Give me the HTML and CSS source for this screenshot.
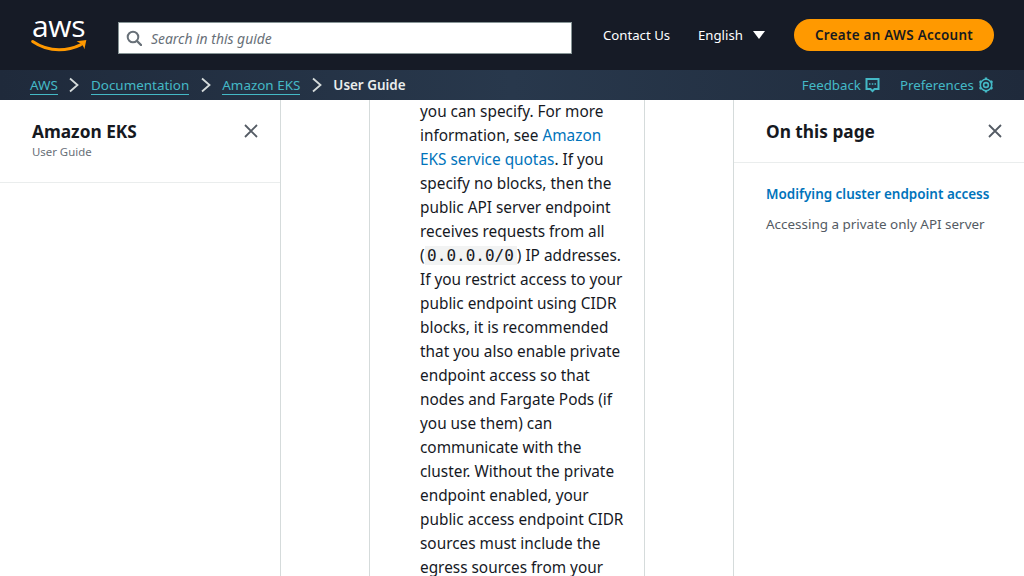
FILE: index.html
```html
<!DOCTYPE html>
<html lang="en">
<head>
<meta charset="utf-8">
<title>Amazon EKS User Guide</title>
<link rel="stylesheet" href="styles.css">
</head>
<body>
<header class="topbar">
  <a class="logo" href="#">
    <span class="logo-text">aws</span>
    <svg class="logo-smile" width="58" height="14" viewBox="0 0 58 14"><path d="M1 2.500C9 8 18 11 28 11C36 11 44 9 50 6" fill="none" stroke="#f90" stroke-width="3" stroke-linecap="round"/><path d="M46 2.300L56 1L54 10.500C53.500 7.500 51 4.500 46 2.300Z" fill="#f90"/></svg>
  </a>
  <label class="search">
    <svg width="16" height="16" viewBox="0 0 16 16"><circle cx="7" cy="7" r="5.300" fill="none" stroke="#687078" stroke-width="2"/><path d="M11 11L15 15" stroke="#687078" stroke-width="2.400" stroke-linecap="round"/></svg>
    <span class="search-text">Search in this guide</span>
  </label>
  <a class="top-link contact" href="#">Contact Us</a>
  <a class="top-link lang" href="#"><span class="lang-name">English</span><span class="caret"></span></a>
  <a class="cta" href="#">Create an AWS Account</a>
</header>
<nav class="crumbs">
  <a href="#">AWS</a>
  <svg class="chev" width="12" height="16" viewBox="0 0 12 16"><path d="M2 1.500L9.500 8L2 14.500" fill="none" stroke="#d5dbdb" stroke-width="1.800"/></svg>
  <a href="#">Documentation</a>
  <svg class="chev" width="12" height="16" viewBox="0 0 12 16"><path d="M2 1.500L9.500 8L2 14.500" fill="none" stroke="#d5dbdb" stroke-width="1.800"/></svg>
  <a href="#">Amazon EKS</a>
  <svg class="chev" width="12" height="16" viewBox="0 0 12 16"><path d="M2 1.500L9.500 8L2 14.500" fill="none" stroke="#d5dbdb" stroke-width="1.800"/></svg>
  <span class="current">User Guide</span>
  <span class="tools">
    <a href="#">Feedback<svg width="15" height="16" viewBox="0 0 15 16"><path d="M1.500 2H13.500V12H9.500L7.500 14L5.500 12H1.500Z" fill="none" stroke="#44b9c6" stroke-width="2"/><path d="M4 7H5.500M6.800 7H8.300M9.500 7H11" stroke="#44b9c6" stroke-width="1.600"/></svg></a>
    <a href="#">Preferences<svg width="16" height="16" viewBox="0 0 16 16"><circle cx="8" cy="8" r="2.400" fill="none" stroke="#44b9c6" stroke-width="1.600"/><circle cx="8" cy="8" r="5.700" fill="none" stroke="#44b9c6" stroke-width="1.600"/><path d="M8 0.500V2.500M8 13.500V15.500M1.500 4.250L3.300 5.300M12.700 10.700L14.500 11.750M1.500 11.750L3.300 10.700M12.700 5.300L14.500 4.250" stroke="#44b9c6" stroke-width="2.400"/></svg></a>
  </span>
</nav>
<main class="main">
  <aside class="nav-panel">
    <div class="panel-head">
      <div>
        <h2>Amazon EKS</h2>
        <p class="sub">User Guide</p>
      </div>
      <svg class="close" width="16" height="16" viewBox="0 0 16 16"><path d="M2 2L14 14M14 2L2 14" stroke="#545b64" stroke-width="1.800"/></svg>
    </div>
  </aside>
  <div class="content">
    <article class="article">
      <p>you can specify. For more information, see <a href="#">Amazon EKS service quotas</a>. If you specify no blocks, then the public API server endpoint receives requests from all (<code>0.0.0.0/0</code>) IP addresses. If you restrict access to your public endpoint using CIDR blocks, it is recommended that you also enable private endpoint access so that nodes and Fargate Pods (if you use them) can communicate with the cluster. Without the private endpoint enabled, your public access endpoint CIDR sources must include the egress sources from your</p>
    </article>
  </div>
  <aside class="toc-panel">
    <div class="toc-head">
      <h2>On this page</h2>
      <svg class="close" width="16" height="16" viewBox="0 0 16 16"><path d="M2 2L14 14M14 2L2 14" stroke="#545b64" stroke-width="1.800"/></svg>
    </div>
    <div class="toc-list">
      <a class="toc-active" href="#">Modifying cluster endpoint access</a>
      <a class="toc-item" href="#">Accessing a private only API server</a>
    </div>
  </aside>
</main>
</body>
</html>
```
FILE: styles.css
```css
* { box-sizing: border-box; }
html, body { margin: 0; height: 100%; }
body {
  display: flex;
  flex-direction: column;
  height: 576px;
  overflow: hidden;
  font-family: "Noto Sans", "Open Sans", sans-serif;
  color: #16191f;
  background: #fff;
}
a { text-decoration: none; }
h2, p { margin: 0; }

.topbar {
  display: flex;
  align-items: center;
  height: 70px;
  flex: none;
  background: #161b26;
  padding-left: 31px;
}
.logo {
  display: flex;
  flex-direction: column;
  flex: none;
  width: 58px;
  height: 40px;
  margin-right: 29px;
  margin-top: -4px;
  color: #fff;
}
.logo-text {
  font-family: "Open Sans", sans-serif;
  font-size: 30px;
  font-weight: 500;
  line-height: 25px;
  letter-spacing: -0.3px;
  height: 27px;
  padding-left: 1px;
}
.logo-smile { display: block; }
.search {
  display: flex;
  align-items: center;
  gap: 9px;
  flex: none;
  width: 454px;
  height: 32px;
  padding-left: 7px;
  background: #fff;
  border: 1px solid #879596;
  margin-right: 31px;
  margin-top: 6px;
}
.search-text { font-size: 13.900px; font-style: italic; color: #687078; }
.top-link { flex: none; color: #fff; font-size: 13.200px; white-space: nowrap; }
.contact { width: 66px; margin-right: 29px; }
.lang { display: flex; align-items: center; margin-right: 29px; }
.lang-name { width: 55px; }
.caret {
  width: 0;
  height: 0;
  border-left: 6px solid transparent;
  border-right: 6px solid transparent;
  border-top: 8px solid #fff;
}
.cta {
  display: flex;
  align-items: center;
  justify-content: center;
  flex: none;
  width: 200px;
  height: 32px;
  border-radius: 16px;
  background: #f90;
  color: #16191f;
  font-size: 13.440px;
  font-weight: 600;
  letter-spacing: 0.28px;
  white-space: nowrap;
}

.crumbs {
  display: flex;
  align-items: center;
  height: 30px;
  flex: none;
  padding: 0 30px;
  background: linear-gradient(90deg, #1f2a3b, #28384c 50%, #1f2a3b);
  font-size: 13.440px;
  gap: 10.500px;
}
.crumbs > a {
  color: #44b9c6;
  line-height: 18px;
  border-bottom: 1px solid #44b9c6;
}
.chev { flex: none; }
.current { color: #eaeded; font-weight: 600; }
.tools { display: flex; gap: 20px; margin-left: auto; font-size: 13.300px; }
.tools a { display: flex; align-items: center; gap: 4px; color: #44b9c6; }

.main { display: flex; flex: 1; min-height: 0; overflow: hidden; }
.nav-panel { flex: none; width: 281px; border-right: 1px solid #d5dbdb; }
.panel-head {
  display: flex;
  justify-content: space-between;
  height: 83px;
  padding: 20px 21px 0 32px;
  border-bottom: 1px solid #eaeded;
}
.panel-head h2, .toc-head h2 { font-size: 17.280px; line-height: 24px; font-weight: 700; }
.sub { font-size: 11.400px; line-height: 16px; color: #687078; }
.close { flex: none; margin-top: 3px; }

.content { flex: 1; padding-left: 88px; min-width: 0; }
.article {
  width: 276px;
  height: 100%;
  padding: 0 20px 0 50px;
  border-left: 1px solid #d5dbdb;
  border-right: 1px solid #d5dbdb;
  font-size: 15.360px;
  line-height: 24px;
}
.article a { color: #0073bb; }
code {
  font-family: "DejaVu Sans Mono", monospace;
  font-size: 16px;
  line-height: 20px;
  background: #f2f3f3;
  padding: 0 3px 0 2.500px;
}

.toc-panel { flex: none; width: 291px; border-left: 1px solid #d5dbdb; }
.toc-head {
  display: flex;
  justify-content: space-between;
  height: 63px;
  padding: 20px 21px 0 32px;
  border-bottom: 1px solid #eaeded;
}
.toc-list { display: flex; flex-direction: column; gap: 10px; padding: 21px 32px 0; }
.toc-active { font-size: 13.440px; line-height: 20px; font-weight: 600; color: #0073bb; white-space: nowrap; }
.toc-item { font-size: 13.440px; line-height: 20px; color: #545b64; white-space: nowrap; }
```
